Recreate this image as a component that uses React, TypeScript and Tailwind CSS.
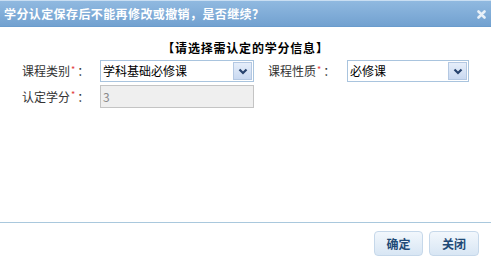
import { ReactNode } from 'react';

const font = { fontFamily: '"Noto Sans CJK SC", "Liberation Sans", sans-serif' };

function Chevron() {
  return (
    <svg width="10" height="7" viewBox="0 0 10 7">
      <path d="M1.5 1.5 L5 5 L8.5 1.5" fill="none" stroke="#27436e" strokeWidth="2.2" />
    </svg>
  );
}

function Label({ children }: { children: ReactNode }) {
  return (
    <span className="flex items-center text-[12px] leading-none text-[#333]">
      {children}
      <span className="text-[9px] text-[#e23b3b] -mt-[4px] ml-[1px]">*</span>
      <span className="ml-[2px]">：</span>
    </span>
  );
}

function Select({ value, width }: { value: string; width: string }) {
  return (
    <div className={`${width} h-[22px] flex items-center border border-[#a9c4de] bg-white pl-[2px] pr-[1px]`}>
      <span className="flex-1 text-[12px] leading-none text-black">{value}</span>
      <span className="w-[19px] h-[18px] flex items-center justify-center border border-[#b4c8e2] bg-gradient-to-b from-[#e6eefa] to-[#c9d9f1]">
        <Chevron />
      </span>
    </div>
  );
}

export default function App() {
  return (
    <div className="w-[491px] h-[259px] flex flex-col bg-white overflow-hidden" style={font}>
      {/* Title bar */}
      <div className="h-[27px] flex items-center justify-between pl-[4px] pr-[5px] border-t border-[#c9def2] border-b border-b-[#6a9ccd] bg-gradient-to-b from-[#90b9e0] to-[#72a1d0]">
        <span className="text-[12px] font-bold text-white tracking-[0.4px]">学分认定保存后不能再修改或撤销，是否继续？</span>
        <svg width="9" height="9" viewBox="0 0 9 9" className="mt-[2px]">
          <path d="M1.5 1.5 L7.5 7.5 M7.5 1.5 L1.5 7.5" stroke="#e8f0f8" strokeWidth="2.6" strokeLinecap="round" />
        </svg>
      </div>

      {/* Body */}
      <div className="flex-1 flex flex-col">
        <div className="mt-[13px] text-center text-[12px] font-bold leading-[16px] tracking-[0.8px] text-black">【请选择需认定的学分信息】</div>

        <div className="mt-[4px] flex items-center pl-[22px]">
          <div className="w-[78px]"><Label>课程类别</Label></div>
          <Select value="学科基础必修课" width="w-[154px]" />
          <div className="w-[79px] ml-[14px]"><Label>课程性质</Label></div>
          <Select value="必修课" width="w-[122px]" />
        </div>

        <div className="mt-[3px] flex items-center pl-[22px]">
          <div className="w-[78px]"><Label>认定学分</Label></div>
          <div className="w-[154px] h-[23px] flex items-center border border-[#c4c4c4] bg-[#efefef] pl-[2px] text-[12px] text-[#8a8a8a]">3</div>
        </div>
      </div>

      {/* Footer */}
      <div className="h-[37px] border-t border-[#a9c8dd] flex items-start justify-end gap-[6px] pr-[12px] pt-[8px]">
        <button className="w-[49px] h-[25px] rounded-[4px] border border-[#c6d8ea] bg-gradient-to-b from-[#f2f7fc] to-[#d8e6f4] text-[12px] font-bold text-[#1f4a77]">确定</button>
        <button className="w-[50px] h-[25px] rounded-[4px] border border-[#c6d8ea] bg-gradient-to-b from-[#f2f7fc] to-[#d8e6f4] text-[12px] font-bold text-[#1f4a77]">关闭</button>
      </div>
    </div>
  );
}
